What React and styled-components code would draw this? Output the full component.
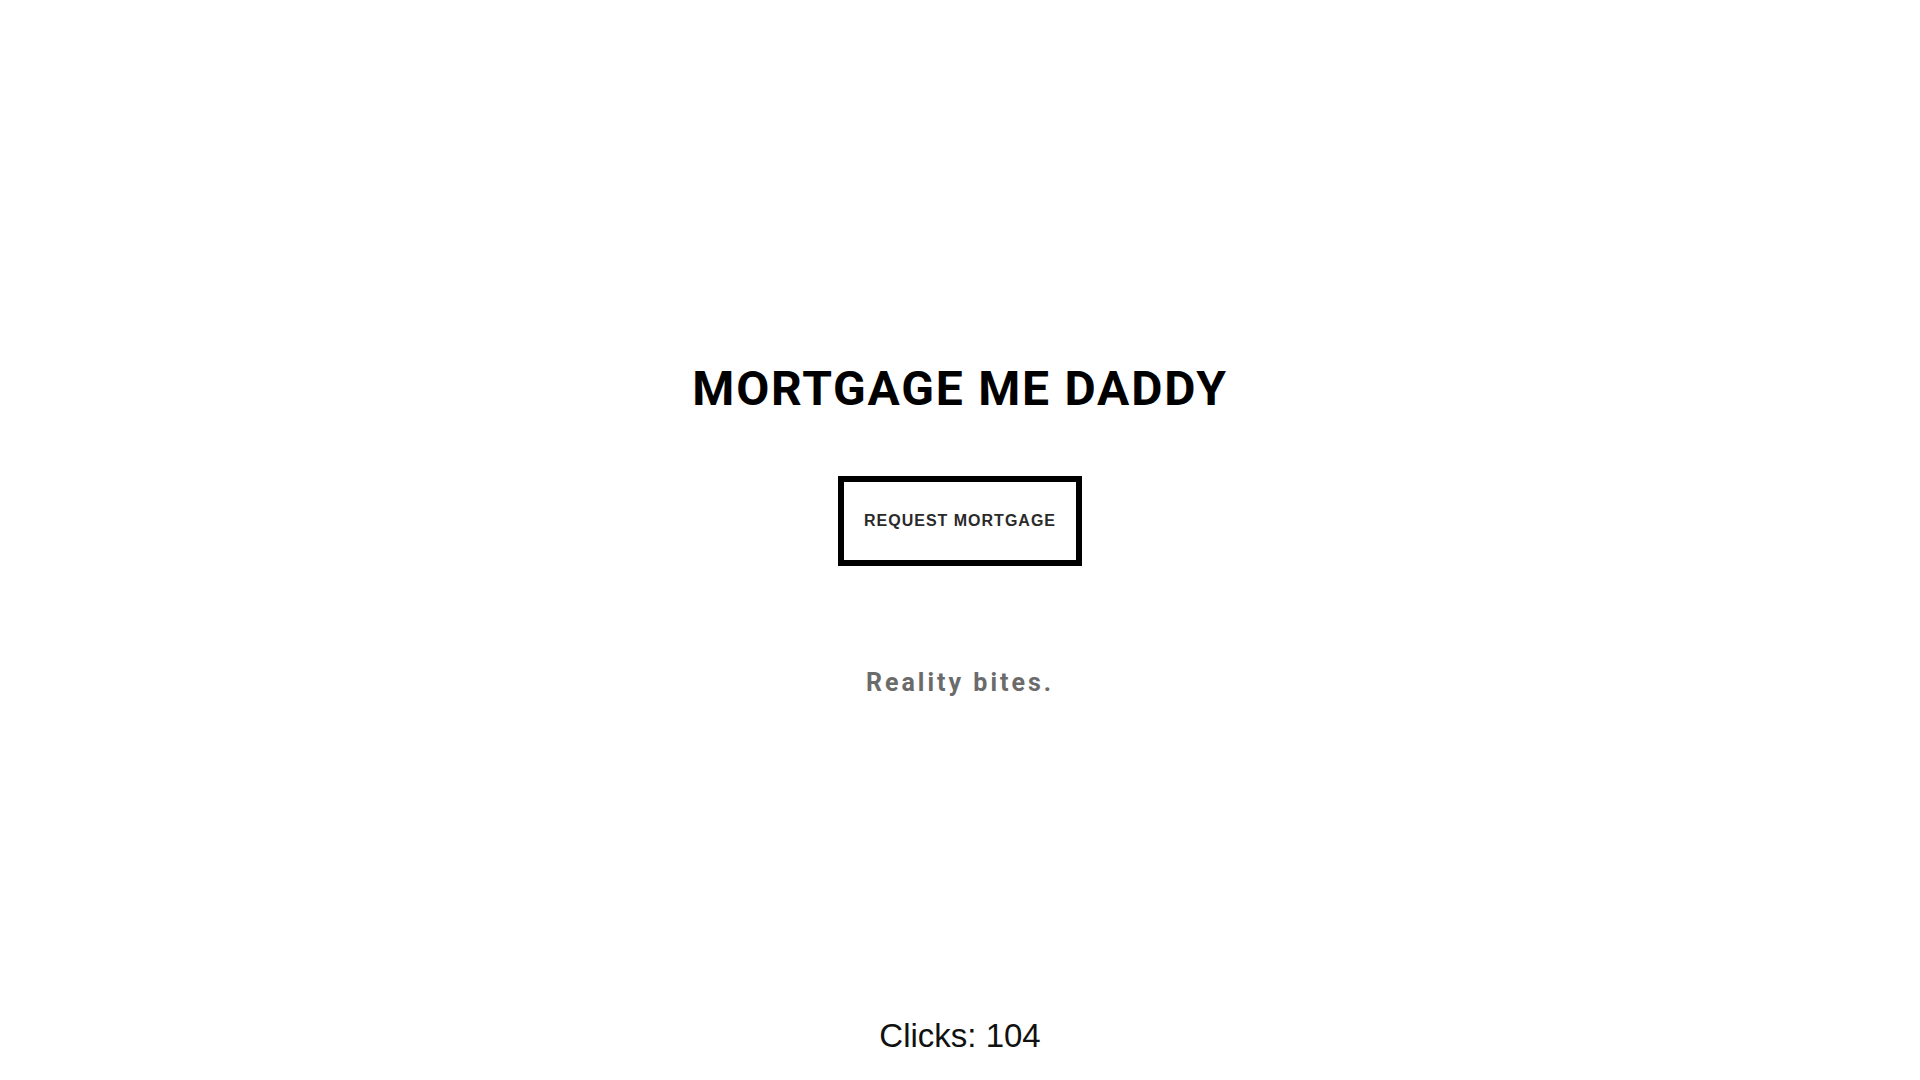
import React from 'react';
import styled, { createGlobalStyle } from 'styled-components';

const GlobalStyle = createGlobalStyle`
  html, body {
    margin: 0;
    padding: 0;
    background: #fff;
  }
`;

const Page = styled.div`
  display: flex;
  flex-direction: column;
  align-items: center;
  min-height: 100vh;
  box-sizing: border-box;
  padding-top: 360px;
  padding-bottom: 24px;
`;

const Title = styled.h1`
  margin: 0;
  font-family: Roboto, 'Noto Sans', sans-serif;
  font-weight: 700;
  font-size: 48px;
  line-height: 1.2;
  letter-spacing: 1.8px;
  color: #000;
`;

const Button = styled.button`
  margin-top: 58px;
  padding: 30px 20px;
  border: 6px solid #000;
  background: #fff;
  font-family: 'Liberation Sans', Arial, sans-serif;
  font-weight: 700;
  font-size: 16px;
  line-height: 18px;
  letter-spacing: 1px;
  color: #2a2a2a;
  text-transform: uppercase;
  cursor: pointer;
`;

const Tagline = styled.p`
  margin: 102px 0 0;
  font-family: Roboto, 'Noto Sans', sans-serif;
  font-weight: 700;
  font-size: 25px;
  line-height: 30px;
  letter-spacing: 3px;
  color: #6b6b6b;
`;

const Counter = styled.div`
  margin-top: auto;
  font-family: 'Liberation Sans', Arial, sans-serif;
  font-size: 33px;
  line-height: 40px;
  color: #111;
`;

export default function App() {
  const [clicks, setClicks] = React.useState(104);
  return (
    <Page>
      <GlobalStyle />
      <Title>MORTGAGE ME DADDY</Title>
      <Button onClick={() => setClicks(c => c + 1)}>Request Mortgage</Button>
      <Tagline>Reality bites.</Tagline>
      <Counter>Clicks: {clicks}</Counter>
    </Page>
  );
}
